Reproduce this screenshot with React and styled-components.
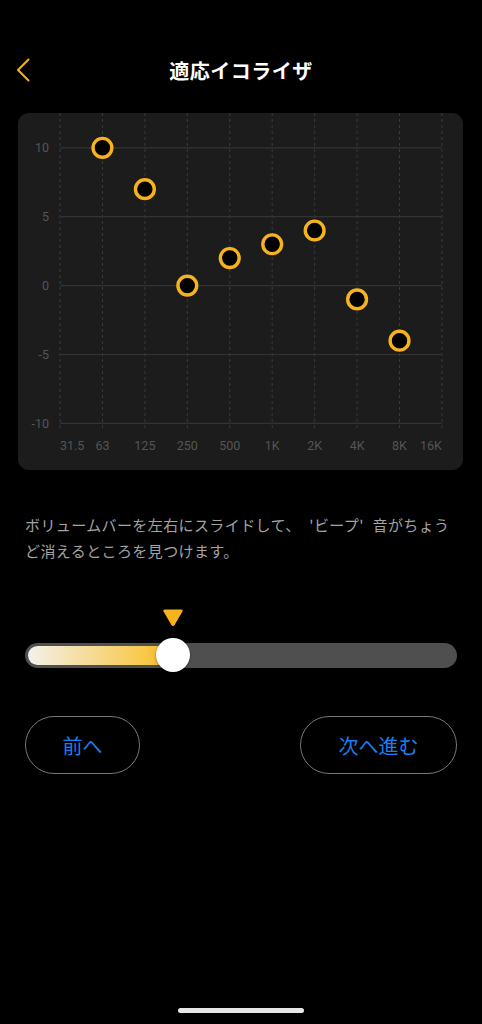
import * as React from 'react'
import styled, { createGlobalStyle } from 'styled-components'

const YELLOW = '#f6b31b'

const GlobalStyle = createGlobalStyle`
    html, body {
        margin: 0;
        padding: 0;
        background: #000;
    }
    body {
        font-family: 'Noto Sans CJK JP', 'Noto Sans', sans-serif;
        -webkit-font-smoothing: antialiased;
    }
`

const Screen = styled.div`
    width: 482px;
    min-height: 1024px;
    display: flex;
    flex-direction: column;
    background: #000;
    color: #fff;
`

/* header */
const Header = styled.header`
    margin-top: 42px;
    height: 56px;
    display: grid;
    grid-template-columns: 56px 1fr 56px;
    align-items: center;
`
const BackButton = styled.button`
    border: 0;
    background: none;
    padding: 0 0 0 16px;
    height: 100%;
    display: flex;
    align-items: center;
    cursor: pointer;
`
const Title = styled.h1`
    margin: 0;
    text-align: center;
    font-size: 20px;
    font-weight: 700;
    letter-spacing: 0.5px;
    color: #fff;
`

/* chart */
const ChartCard = styled.section`
    margin: 15px 19px 0 18px;
    height: 357px;
    background: #1c1c1c;
    border-radius: 11px;
    overflow: hidden;
`

const bands = ['31.5', '63', '125', '250', '500', '1K', '2K', '4K', '8K', '16K']
const gains = [null, 10, 7, 0, 2, 3, 4, -1, -4, null]
const levels = [10, 5, 0, -5, -10]

const colX = i => 42 + i * 42.44
const rowY = v => 172.6 - v * 13.78

const EqChart = () => (
    <svg width="445" height="357" viewBox="0 0 445 357">
        {bands.map((b, i) => (
            <line key={`v-${b}`} x1={colX(i)} x2={colX(i)} y1="0" y2="318"
                stroke="#3a3a3a" strokeWidth="1" strokeDasharray="3 3" />
        ))}
        {levels.map(l => (
            <line key={`h-${l}`} x1={colX(0)} x2={colX(9)} y1={rowY(l)} y2={rowY(l)}
                stroke="#333" strokeWidth="1.2" />
        ))}
        {levels.map(l => (
            <text key={`yl-${l}`} x="31" y={rowY(l) + 4.5} textAnchor="end"
                fill="#555" fontSize="12.5" fontFamily="Roboto, sans-serif">{l}</text>
        ))}
        {bands.map((b, i) => (
            <text key={`xl-${b}`} x={colX(i)} y="337"
                textAnchor={i === 0 ? 'start' : i === 9 ? 'end' : 'middle'}
                fill="#555" fontSize="12.5" fontFamily="Roboto, sans-serif">{b}</text>
        ))}
        {gains.map((g, i) => g === null ? null : (
            <circle key={`p-${i}`} cx={colX(i)} cy={rowY(g)} r="9.4"
                fill="#000" stroke={YELLOW} strokeWidth="3.4" />
        ))}
    </svg>
)

/* description */
const Description = styled.p`
    margin: 42px 0 0;
    padding: 0 26px 0 25px;
    font-size: 15px;
    line-height: 26px;
    color: #a3a3a3;
    letter-spacing: 0.4px;
    word-spacing: 5px;
`

/* slider */
const SliderBox = styled.div`
    position: relative;
    margin: 44px 25px 0;
    height: 64px;
`
const Marker = styled.svg`
    position: absolute;
    top: 0;
    transform: translateX(-50%);
`
const Track = styled.div`
    position: absolute;
    left: 0;
    right: 0;
    top: 35px;
    height: 25px;
    border-radius: 13px;
    background: #4f4f4f;
    padding: 3px;
    box-sizing: border-box;
`
const Fill = styled.div`
    height: 100%;
    border-radius: 10px 0 0 10px;
    background: linear-gradient(to right, #f4f1ea 0%, #f5dfa6 35%, #f8c94a 80%, ${YELLOW} 100%);
`
const Thumb = styled.div`
    position: absolute;
    top: 30px;
    width: 34px;
    height: 34px;
    border-radius: 50%;
    background: #fff;
    transform: translateX(-50%);
    box-shadow: 0 1px 3px rgba(0,0,0,0.4);
`

const VolumeSlider = ({ value }) => {
    const pos = value * 432
    return (
        <SliderBox>
            <Marker width="22" height="19" viewBox="0 0 22 19" style={{ left: pos }}>
                <path d="M3 1.5 H19 Q21.5 1.5 20.3 3.8 L12.6 17 Q11 19.2 9.4 17 L1.7 3.8 Q0.5 1.5 3 1.5 Z" fill={YELLOW} />
            </Marker>
            <Track>
                <Fill style={{ width: pos - 3 }} />
            </Track>
            <Thumb style={{ left: pos }} />
        </SliderBox>
    )
}

/* buttons */
const ButtonRow = styled.div`
    display: flex;
    justify-content: space-between;
    margin-top: 44px;
    padding: 0 25px;
`
const PillButton = styled.button`
    box-sizing: border-box;
    width: ${p => p.$w}px;
    height: 58px;
    border-radius: 29px;
    border: 1.5px solid #777;
    background: transparent;
    color: #1a7ff2;
    font-family: 'Noto Sans CJK JP', sans-serif;
    font-size: 20px;
    cursor: pointer;
`

const HomeIndicator = styled.div`
    margin: auto auto 11px;
    width: 126px;
    height: 5px;
    border-radius: 3px;
    background: #e6e6e6;
`

const App = () => (
    <Screen>
        <GlobalStyle />
        <Header>
            <BackButton aria-label="戻る">
                <svg width="14" height="24" viewBox="0 0 14 24">
                    <path d="M12.5 1.5 L2 12 L12.5 22.5" fill="none" stroke={YELLOW} strokeWidth="2" strokeLinecap="round" strokeLinejoin="round" />
                </svg>
            </BackButton>
            <Title>適応イコライザ</Title>
            <div />
        </Header>
        <ChartCard>
            <EqChart />
        </ChartCard>
        <Description>
            ボリュームバーを左右にスライドして、 'ビープ' 音がちょうど消えるところを見つけます。
        </Description>
        <VolumeSlider value={0.3426} />
        <ButtonRow>
            <PillButton $w={115}>前へ</PillButton>
            <PillButton $w={157}>次へ進む</PillButton>
        </ButtonRow>
        <HomeIndicator />
    </Screen>
)

export default App
